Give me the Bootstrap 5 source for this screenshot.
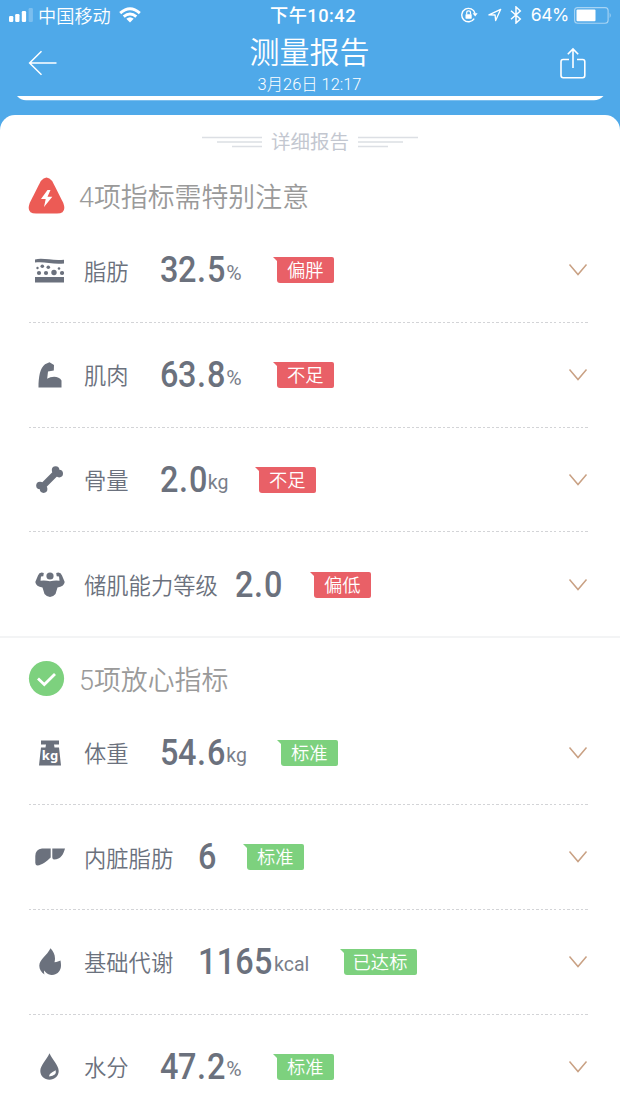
<!DOCTYPE html>
<html lang="zh-CN">
<head>
<meta charset="utf-8">
<meta name="viewport" content="width=device-width, initial-scale=1">
<title>测量报告</title>
<link href="https://cdn.jsdelivr.net/npm/bootstrap@5.3.0/dist/css/bootstrap.min.css" rel="stylesheet">
<style>
  :root { --ink: #6b717d; --sky: #4fa9e9; --warn: #e96067; --good: #7dd17e; }
  body { font-family: "Roboto", "Noto Sans CJK SC", sans-serif; color: var(--ink); background: #fff; height: 1102px; overflow: hidden; }
  svg { display: block; flex: none; }
  .top-area { background: var(--sky); height: 150px; color: #fff; }
  .status-bar { height: 30px; display: grid; grid-template-columns: 1fr auto 1fr; padding: 0 8px 0 9px; }
  .carrier { font-size: 18.2px; font-weight: 350; line-height: 26px; margin: 4px 8px 0 5px; }
  .clock { font-size: 18.2px; font-weight: 500; line-height: 26px; padding-top: 3px; letter-spacing: .5px; margin-left: 5px; }
  .batt { font-size: 17.6px; font-weight: 400; font-family: "Inter", "Roboto", sans-serif; letter-spacing: -.4px; margin-left: 9px; padding-top: 1px; }
  .batt-icon { margin-left: 5px; }
  .lock-icon { margin-right: 10px; }
  .title-bar { height: 66px; padding: 0 33px 0 28px; }
  .page-head { margin-left: 2px; }
  .page-title { font-size: 30px; font-weight: 350; line-height: 44px; margin: 0; }
  .page-date { font-size: 16.4px; font-weight: 300; line-height: 20px; }
  .report-sheet { background: #fff; margin-top: -35px; border-radius: 15px 15px 0 0; position: relative; }
  .sheet-title { height: 53px; font-size: 19.5px; color: #c3c7d0; gap: 9px; }
  .sheet-title span { padding-top: 2px; }
  .group-head { padding-left: 28px; font-size: 26.9px; font-weight: 350; color: #9a9a9a; gap: 14px; }
  .group-head span { padding-top: 5px; }
  .group-warn { height: 49px; padding-top: 6px; }
  .group-good { height: 63px; padding-top: 19px; border-top: 2px solid #f3f4f5; }
  .metric { height: 104.8px; padding-top: 2px; margin: 0 32px 0 29px; }
  .metric + .metric { background: repeating-linear-gradient(90deg, #d3d4d7 0 2.4px, transparent 2.4px 4.45px) top / 100% 1px no-repeat; }
  .pic { width: 41px; margin-right: 14px; }
  .pic svg { margin: 0 auto; fill: var(--ink); }
  .metric-name { width: var(--name-w, 75.5px); font-size: 22.3px; font-weight: 350; flex: none; white-space: nowrap; padding-top: 4px; }
  .metric-value { width: var(--value-w); flex: none; white-space: nowrap; line-height: 50px; height: 50px; }
  .num { display: inline-block; font-size: 36px; font-weight: 500; letter-spacing: -.5px; transform: scaleX(.9); transform-origin: 0 0; margin-right: -7px; }
  .num i { font-style: normal; margin: 0 1.6px 0 1.2px; }
  .unit { display: inline-block; line-height: 24px; font-size: 19.5px; font-weight: 400; opacity: .9; margin-left: 1.5px; vertical-align: 3px; }
  .pct { font-size: 21px; vertical-align: 2.5px; }
  .tag-flag { position: relative; width: 57.5px; height: 26px; margin-left: 3px; border-radius: 0 2px 2px 3px; background: var(--tone); color: #fff; font-size: 18.3px; font-weight: 350; line-height: 28px; text-align: center; flex: none; }
  .tag-flag::before { content: ""; position: absolute; left: -4px; top: 0; border-top: 4px solid var(--tone); border-left: 4px solid transparent; }
  .tone-warn { --tone: var(--warn); }
  .tone-good { --tone: var(--good); }
  .name-4 { --name-w: 113.5px; }
  .name-6 { --name-w: 150.5px; }
  .val-pct { --value-w: 114px; }
  .val-kg-s { --value-w: 96px; }
  .val-kg-s .num { margin-right: -5.5px; }
  .val-kg { --value-w: 118px; }
  .val-level { --value-w: 76px; }
  .val-digit { --value-w: 46px; }
  .val-kcal { --value-w: 143px; }
  .val-kcal .num { letter-spacing: .3px; margin-right: -8px; }
  .tag-wide { width: 73px; }
  .chev { fill: none; stroke: #c9a184; stroke-width: 1.5; }
</style>
</head>
<body>
<svg width="0" height="0" class="position-absolute"><defs><symbol id="chev" viewBox="0 0 20 14"><path d="M1.5 1.5 10 11.5 18.5 1.5"/></symbol></defs></svg>

<header class="top-area">
  <div class="status-bar">
    <div class="d-flex align-items-center">
      <svg width="24" height="14" viewBox="0 0 24 14" fill="#fff"><rect y="8" width="4.3" height="6" rx="1.2"/><rect x="6.2" y="6" width="4.3" height="8" rx="1.2"/><rect x="12.8" y="3" width="4.3" height="11" rx="1.2"/><rect x="19.6" y="0" width="4.3" height="14" rx="1.2" opacity=".25"/></svg>
      <span class="carrier">中国移动</span>
      <svg width="22" height="16" viewBox="0 0 22 16" fill="none" stroke="#fff" stroke-width="2.9"><path d="M1.2 6.2Q11-2.6 20.8 6.2"/><path d="M4.7 9.7Q11 4.2 17.3 9.7"/><path d="M7.3 11.8Q11 8.8 14.7 11.8L11 15.6Z" fill="#fff" stroke="none"/></svg>
    </div>
    <div class="clock">下午10:42</div>
    <div class="d-flex align-items-center justify-content-end">
      <svg class="lock-icon" width="17" height="16" viewBox="0 0 17 16" fill="none" stroke="#fff" stroke-width="1.4"><path d="M13.2 11.6A6.7 6.7 0 1 1 14 6.5"/><path d="M11.6 6.3H16.6L14.2 9.6Z" fill="#fff" stroke="none"/><path d="M5.7 7.5V5.8a1.9 1.9 0 0 1 3.8 0v1.7" stroke-width="1.2"/><rect x="4.5" y="7.2" width="6.2" height="4.5" rx=".6" fill="#fff" stroke="none"/></svg>
      <svg width="14" height="14" viewBox="0 0 15 15" fill="none" stroke="#fff" stroke-width="1.4" stroke-linejoin="round"><path d="M1 7.4 13.6 1.4 8.2 13.5 7.6 7.5Z"/></svg>
      <svg class="ms-2" width="12" height="18" viewBox="0 0 12 18" fill="none" stroke="#fff" stroke-width="1.5"><path d="M1 4.7 10.3 13 6 17V1L10.3 5 1 13.3"/></svg>
      <span class="batt">64%</span>
      <svg class="batt-icon" width="38" height="17" viewBox="0 0 38 17"><rect x=".6" y=".6" width="33.5" height="15.6" rx="3" fill="none" stroke="#fff" stroke-opacity=".5" stroke-width="1.1"/><rect x="2.5" y="2.6" width="19" height="11.6" rx="1" fill="#fff"/><path d="M35.7 5.8q2 2.6 0 5.2z" fill="#fff" opacity=".5"/></svg>
    </div>
  </div>
  <div class="title-bar d-flex justify-content-between align-items-center">
    <svg width="29" height="26" viewBox="0 0 29 26" fill="none" stroke="#fff" stroke-width="1.5"><path d="M13.5 1.2 1.6 13 13.5 24.8M1.6 13H28.5"/></svg>
    <div class="page-head text-center">
      <h1 class="page-title">测量报告</h1>
      <div class="page-date">3月26日 12:17</div>
    </div>
    <svg width="27" height="32" viewBox="0 0 27 32" fill="none" stroke="#fff" stroke-width="1.6"><path d="M9 12.5H3.2Q1 12.5 1 14.7V28.6Q1 30.8 3.2 30.8H22.6Q24.8 30.8 24.8 28.6V14.7Q24.8 12.5 22.6 12.5H17M13 21V2M7.8 7.2 13 2 18.2 7.2"/></svg>
  </div>
  <svg width="620" height="5" viewBox="0 0 620 5"><path d="M17 0H603.5Q599 4.300 594 4.300H26Q21 4.300 17 0Z" fill="#fff"/></svg>
</header>

<main class="report-sheet">
  <div class="sheet-title d-flex justify-content-center align-items-center">
    <svg width="60" height="12" viewBox="0 0 60 12" stroke="#dcdfe4" stroke-width="1.3"><path d="M0 1.5H60M15 6H60M30 10.5H60"/></svg>
    <span>详细报告</span>
    <svg width="60" height="12" viewBox="0 0 60 12" stroke="#dcdfe4" stroke-width="1.3"><path d="M0 1.5H60M0 6H45M0 10.5H30"/></svg>
  </div>

  <section>
    <div class="group-head group-warn d-flex align-items-center">
      <svg width="37" height="37" viewBox="0 0 37 37"><path d="M12.8 4Q18.5-3 24.2 4L35.3 26Q39 36.5 29 36.5H8Q-2 36.5 1.7 26Z" fill="#ec5b55"/><path d="M19.5 13 13 22H17.7L16 30 24.3 19.8H19.5L22.5 13Z" fill="#fff"/></svg>
      <span>4项指标需特别注意</span>
    </div>
    <div class="metric d-flex align-items-center val-pct tone-warn">
      <div class="pic"><svg width="29" height="25" viewBox="0 0 29 25"><path d="M0 1.5C8-.5 17 3 29 1.7V5.5C18 7 9 3 0 4.6Z"/><path d="M0 19H29V24.5H0Z"/><circle cx="2.5" cy="10" r="1.2"/><circle cx="7.3" cy="8.3" r="1.8"/><circle cx="13.3" cy="9.3" r="1.8"/><circle cx="24" cy="10.5" r="1.3"/><circle cx="4" cy="15" r="2.1"/><circle cx="11" cy="15" r="2.1"/><circle cx="19" cy="14.5" r="2.7"/><circle cx="27" cy="15" r="2.1"/></svg></div>
      <div class="metric-name">脂肪</div>
      <div class="metric-value"><span class="num">32<i>.</i>5</span><span class="unit pct">%</span></div>
      <div class="tag-flag">偏胖</div>
      <svg class="chev ms-auto" width="20" height="14"><use href="#chev"/></svg>
    </div>
    <div class="metric d-flex align-items-center val-pct tone-warn">
      <div class="pic"><svg width="24" height="26" viewBox="0 0 24 26"><path d="M.5 25.5C.5 15 2 6 7 2.3L11.5.3 16 3 15.8 8.5 10 9.5 9.2 16.800C13 14 21 13.500 23.500 18.500V25.500Z"/></svg></div>
      <div class="metric-name">肌肉</div>
      <div class="metric-value"><span class="num">63<i>.</i>8</span><span class="unit pct">%</span></div>
      <div class="tag-flag">不足</div>
      <svg class="chev ms-auto" width="20" height="14"><use href="#chev"/></svg>
    </div>
    <div class="metric d-flex align-items-center val-kg-s tone-warn">
      <div class="pic"><svg width="27" height="27" viewBox="0 0 27 27"><path d="M6.5 20.5 20.5 6.5" stroke="#6b717d" stroke-width="6.2"/><circle cx="19.6" cy="4" r="3.8"/><circle cx="23.2" cy="7.6" r="3.8"/><circle cx="4" cy="19.5" r="3.8"/><circle cx="7.6" cy="23.1" r="3.8"/></svg></div>
      <div class="metric-name">骨量</div>
      <div class="metric-value"><span class="num">2<i>.</i>0</span><span class="unit">kg</span></div>
      <div class="tag-flag">不足</div>
      <svg class="chev ms-auto" width="20" height="14"><use href="#chev"/></svg>
    </div>
    <div class="metric d-flex align-items-center name-6 val-level tone-warn">
      <div class="pic"><svg width="30" height="25" viewBox="0 0 30 25"><circle cx="15" cy="4" r="3.6"/><path d="M8.8 1Q4.5-.5 3 3.500L.3 10Q1 14.500 7.500 15.500L9.500 22Q12 25 15 25T20.500 22L22.500 15.500Q29 14.500 29.700 10L27 3.500Q25.500-.5 21.200 1L21.700 4.200 24 4.600 24.500 8.700Q20 8 15 9.300Q10 8 5.500 8.700L6 4.600 8.300 4.200Z"/></svg></div>
      <div class="metric-name">储肌能力等级</div>
      <div class="metric-value"><span class="num">2<i>.</i>0</span></div>
      <div class="tag-flag">偏低</div>
      <svg class="chev ms-auto" width="20" height="14"><use href="#chev"/></svg>
    </div>
  </section>

  <section>
    <div class="group-head group-good d-flex align-items-center">
      <svg width="37" height="37" viewBox="0 0 37 37"><circle cx="18.5" cy="18.5" r="17.6" fill="#7dd17e"/><path d="M10 18.500 16.300 24.500 27 14" fill="none" stroke="#fff" stroke-width="2.8"/></svg>
      <span>5项放心指标</span>
    </div>
    <div class="metric d-flex align-items-center val-kg tone-good">
      <div class="pic"><svg width="22" height="26" viewBox="0 0 22 26"><path d="M2 .5H20V4.500H15L15.500 7.500H20L22 25.500H0L2 7.500H6.500L7 4.500H2Z"/><text x="11" y="19.500" font-family="Noto Sans" font-weight="700" font-size="13" text-anchor="middle" fill="#fff">kg</text></svg></div>
      <div class="metric-name">体重</div>
      <div class="metric-value"><span class="num">54<i>.</i>6</span><span class="unit">kg</span></div>
      <div class="tag-flag">标准</div>
      <svg class="chev ms-auto" width="20" height="14"><use href="#chev"/></svg>
    </div>
    <div class="metric d-flex align-items-center name-4 val-digit tone-good">
      <div class="pic"><svg width="30" height="18" viewBox="0 0 30 18"><path d="M7 .5H15.700V9.500C12 13 7 17 2.500 17.500Q.5 17.500.3 15V8Q.5 1 7 .5ZM17.300.5H30C28.500 6 26 11.500 19 11.600Q17.500 11.500 17.300 9.500Z"/></svg></div>
      <div class="metric-name">内脏脂肪</div>
      <div class="metric-value"><span class="num">6</span></div>
      <div class="tag-flag">标准</div>
      <svg class="chev ms-auto" width="20" height="14"><use href="#chev"/></svg>
    </div>
    <div class="metric d-flex align-items-center name-4 val-kcal tone-good">
      <div class="pic"><svg width="22" height="28" viewBox="0 0 22 28"><path d="M11.500.3C15 4 17 8.500 15.500 14.200C18 14 20 13.300 21.500 12.500C22.500 18 22 21 20 23.500C18 26.500 13 28 9.500 26.300C7.500 25.200 6 24 5.300 22.500Q4.600 24 5.600 26.500C2 24.300.2 21 .3 17.500C.6 11.500 8 7.500 11.500.3Z"/></svg></div>
      <div class="metric-name">基础代谢</div>
      <div class="metric-value"><span class="num">1165</span><span class="unit">kcal</span></div>
      <div class="tag-flag tag-wide">已达标</div>
      <svg class="chev ms-auto" width="20" height="14"><use href="#chev"/></svg>
    </div>
    <div class="metric d-flex align-items-center val-pct tone-good">
      <div class="pic"><svg width="19" height="27" viewBox="0 0 19 27"><path d="M9.500.3C12 6 18.700 12.500 18.700 18C18.700 23 14.500 26.700 9.500 26.700S.3 23 .3 18C.3 12.500 7 6 9.500.3Z"/><path d="M15.700 17.200Q17 22.500 9.200 23.400Q8.500 20.500 15.700 17.200Z" fill="#fff"/></svg></div>
      <div class="metric-name">水分</div>
      <div class="metric-value"><span class="num">47<i>.</i>2</span><span class="unit pct">%</span></div>
      <div class="tag-flag">标准</div>
      <svg class="chev ms-auto" width="20" height="14"><use href="#chev"/></svg>
    </div>
  </section>
</main>
<script src="https://cdn.jsdelivr.net/npm/bootstrap@5.3.0/dist/js/bootstrap.bundle.min.js"></script>
</body>
</html>
